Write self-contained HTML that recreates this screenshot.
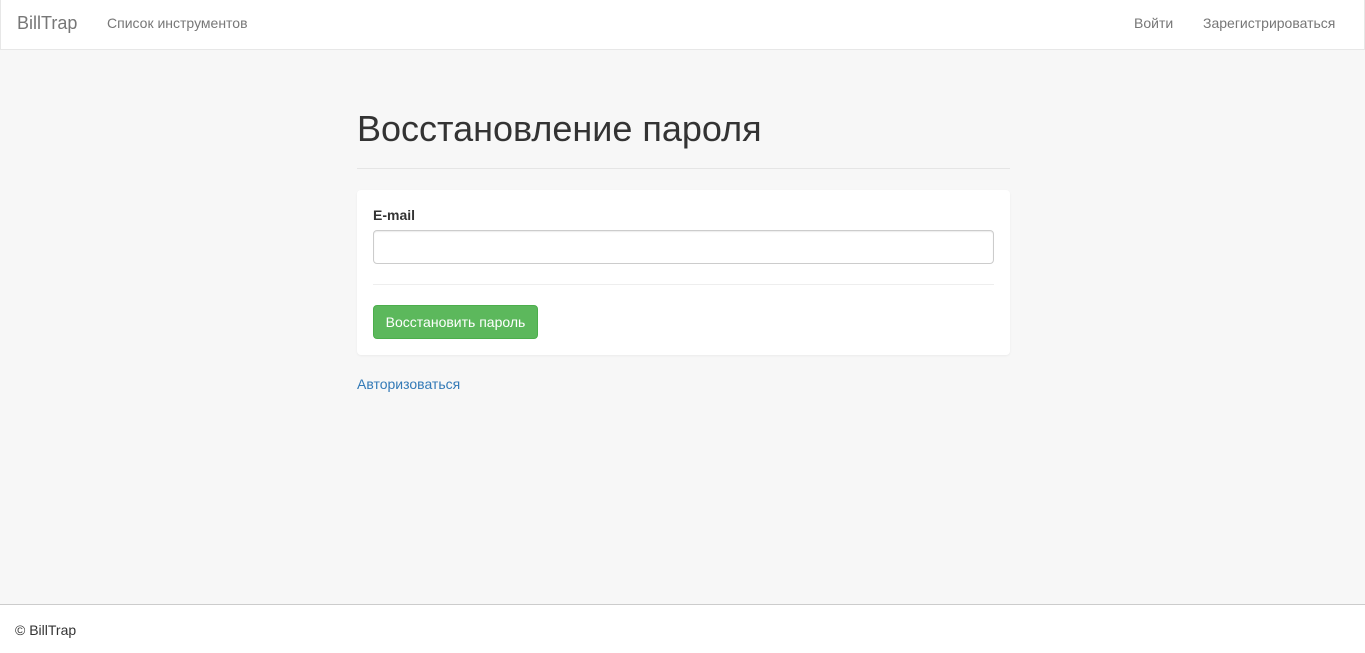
<!DOCTYPE html>
<html><head><meta charset="utf-8"><style>
*{box-sizing:border-box;margin:0;padding:0}
body{width:1365px;height:653px;background:#f7f7f7;font-family:"Liberation Sans",Arial,sans-serif;font-size:14px;color:#333;position:relative;overflow:hidden}
.nav{position:absolute;top:0;left:0;width:1365px;height:50px;background:#fff;border:1px solid #e7e7e7;border-top:none}
.nav span{position:absolute;top:15px;color:#777;font-size:14px}
.brand{left:16px!important;top:13px!important;font-size:18px!important}
h1{position:absolute;left:357px;top:109px;font-size:36px;font-weight:500;color:#333;line-height:40px}
.hr1{position:absolute;left:357px;top:168px;width:653px;border-top:1px solid #e5e5e5}
.panel{position:absolute;left:357px;top:190px;width:653px;height:165px;background:#fff;border-radius:4px;box-shadow:0 1px 2px rgba(0,0,0,.05)}
label{position:absolute;left:16px;top:17px;font-weight:bold;font-size:14px}
.inp{position:absolute;left:16px;top:40px;width:621px;height:34px;border:1px solid #ccc;border-radius:4px;box-shadow:inset 0 1px 1px rgba(0,0,0,.075)}
.hr2{position:absolute;left:16px;top:94px;width:621px;border-top:1px solid #eee}
.btn{position:absolute;left:16px;top:115px;width:165px;height:34px;background:#5cb85c;border:1px solid #4cae4c;border-radius:4px;color:#fff;font-size:14px;line-height:32px;text-align:center}
.link{position:absolute;left:357px;top:376px;color:#337ab7}
.foot{position:absolute;left:0;top:604px;width:1365px;height:49px;background:#fff;border-top:1px solid #ccc}
.foot span{position:absolute;left:15px;top:17px}
</style></head><body>
<div class="nav"><span class="brand">BillTrap</span><span style="left:106px">Список инструментов</span><span style="left:1133px">Войти</span><span style="left:1202px">Зарегистрироваться</span></div>
<h1>Восстановление пароля</h1>
<div class="hr1"></div>
<div class="panel"><label>E-mail</label><div class="inp"></div><div class="hr2"></div><div class="btn">Восстановить пароль</div></div>
<div class="link">Авторизоваться</div>
<div class="foot"><span>© BillTrap</span></div>
</body></html>
